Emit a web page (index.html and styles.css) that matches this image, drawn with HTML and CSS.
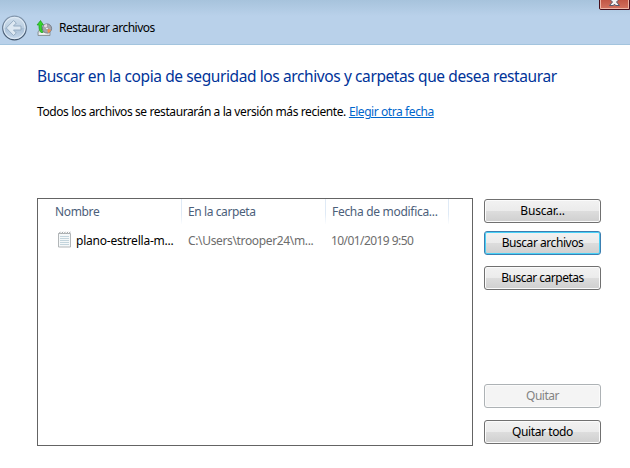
FILE: index.html
```html
<!DOCTYPE html>
<html lang="es">
<head>
<meta charset="utf-8">
<title>Restaurar archivos</title>
<link rel="stylesheet" href="styles.css">
</head>
<body>
<header class="titlebar">
  <svg class="back" width="28" height="28" viewBox="0 0 28 28">
    <defs>
      <linearGradient id="disc" x1="0" y1="0" x2="0" y2="1">
        <stop offset="0" stop-color="#d3e1ee"/><stop offset=".5" stop-color="#b9cde0"/><stop offset=".52" stop-color="#a9c0d7"/><stop offset="1" stop-color="#c8daed"/>
      </linearGradient>
      <linearGradient id="rim" x1="0" y1="0" x2="0" y2="1">
        <stop offset="0" stop-color="#8498ae"/><stop offset="1" stop-color="#3f5268"/>
      </linearGradient>
    </defs>
    <circle cx="13.500" cy="14" r="11.800" fill="url(#disc)" stroke="url(#rim)" stroke-width="1.200"/>
    <circle cx="13.500" cy="14" r="10.600" fill="none" stroke="#e2edf7"/>
    <path d="M12.500 6.500 5.300 14l7.200 7.500 2.800-2.500-2.800-3h7.500v-4h-7.500l2.800-3z" fill="#dde8f2" stroke="#91a8be" stroke-width=".9"/>
  </svg>
  <svg class="app-icon" width="17" height="17" viewBox="0 0 17 17">
    <path d="M2 12 4 9h7l3 3v3.500H2z" fill="#d8dcdc" stroke="#7c8588" stroke-width=".8"/>
    <path d="M3 13.800h8" stroke="#fff"/>
    <circle cx="11" cy="8.500" r="4.600" fill="#a5a6ae" stroke="#6b6f77" stroke-width=".8"/>
    <path d="M11 8.500 7.500 6a4.600 4.600 0 0 1 3.500-2z" fill="#e8d9e6"/>
    <path d="M11 8.500 15 10a4.500 4.500 0 0 1-3 3z" fill="#ef8b4e"/>
    <circle cx="11" cy="8.500" r="1.300" fill="#f5f5f5" stroke="#77737b" stroke-width=".5"/>
    <path d="M5 12.500C3 10.500 2.800 8 3 5H1l3.500-4.500L7.500 5H5.700c-.3 3 0 5 1.400 7.500z" fill="#35d52b" stroke="#159416" stroke-width=".6"/>
  </svg>
  <h1 class="window-title"><span class="t-window">Restaurar archivos</span></h1>
  <svg class="close" width="31" height="10" viewBox="0 0 31 10">
    <defs><linearGradient id="red" x1="0" y1="0" x2="0" y2="1"><stop offset="0" stop-color="#c05342"/><stop offset="1" stop-color="#d47461"/></linearGradient></defs>
    <path d="M.5-1V8q0 1.500 1.500 1.500h28.500V-1z" fill="url(#red)" stroke="#46101c"/>
    <path d="M1.500 0v8.500h28V0" fill="none" stroke="#efb6a7"/>
    <path d="M12-1h2.500l1 1 1-1H19v1.500l-1.500 1.500L20.500 5.500h-4l-1-1.500-1 1.500h-4L13.500 2 12 .5z" fill="#f3f3f3" stroke="#565a6c"/>
  </svg>
</header>
<main class="page">
  <h2 class="heading"><span class="t-heading">Buscar en la copia de seguridad los archivos y carpetas que desea restaurar</span></h2>
  <p class="intro"><span class="t-intro">Todos los archivos se restaurarán a la versión más reciente.</span><a class="link" href="#">Elegir otra fecha</a></p>
  <div class="workspace">
    <section class="list">
      <div class="row head">
        <div class="cell name"><span class="t-name">Nombre</span></div>
        <div class="cell"><span class="t-folder">En la carpeta</span></div>
        <div class="cell"><span class="t-date">Fecha de modifica...</span></div>
      </div>
      <div class="row item">
        <div class="cell file">
          <svg width="15" height="17" viewBox="0 0 15 17">
            <path d="M1.500 2.500h12v13.500h-12z" fill="#f5f8f9" stroke="#b2b6b8"/>
            <path d="M3 5.500h9M3 7.500h9M3 9.500h9M3 11.500h9M3 13.500h9" stroke="#c3d4dc"/>
            <path d="M2 2.500 3.500.8M4.500 2.500 6 .8M7 2.500 8.500.8M9.500 2.500 11 .8M12 2.500 13.300.8" stroke="#9b9fa1"/>
          </svg>
          <span class="t-file">plano-estrella-m...</span>
        </div>
        <div class="cell"><span class="t-path">C:\Users\trooper24\m...</span></div>
        <div class="cell when"><span class="t-when">10/01/2019 9:50</span></div>
      </div>
    </section>
    <aside class="actions">
      <button class="btn"><span class="t-b1">Buscar...</span></button>
      <button class="btn default"><span class="t-b2">Buscar archivos</span></button>
      <button class="btn folders"><span class="t-b3">Buscar carpetas</span></button>
      <button class="btn remove" disabled><span class="t-b4">Quitar</span></button>
      <button class="btn all"><span class="t-b5">Quitar todo</span></button>
    </aside>
  </div>
</main>
</body>
</html>
```
FILE: styles.css
```css
* { box-sizing: border-box; }
body {
  margin: 0;
  width: 630px;
  height: 468px;
  overflow: hidden;
  background: #fff;
  color: #000;
  font: 12px/16px "Noto Sans", "Open Sans", sans-serif;
}
h1, h2, p { margin: 0; font-weight: 400; white-space: nowrap; }
svg { display: block; flex: none; }

.titlebar {
  display: flex;
  height: 45px;
  background: linear-gradient(#a7c3dc, #b9d1ea 16px, #b9d1ea);
  border-bottom: 1px solid #a3c4de;
}
.back { margin: 14px 0 0 1px; }
.app-icon { margin: 20px 0 0 7px; }
.window-title { margin: 20px 0 0 6px; font-size: 12px; line-height: 16px; }
.close { margin-left: auto; }

.page { padding: 20px 29px 0 37px; }
.heading { font-size: 15.5px; line-height: 22px; color: #003399; }
.intro { display: flex; gap: 3px; margin-top: 17px; }
.link { color: #0066cc; text-decoration: underline; text-underline-offset: 1px; letter-spacing: -0.42px; }

.workspace { display: flex; margin-top: 78px; justify-content: space-between; }
.list { width: 436px; height: 248px; border: 1px solid #646464; }
.row { display: grid; grid-template-columns: 144px 144px 123px; white-space: nowrap; }
.head { height: 25px; color: #4c607a; }
.head .cell {
  padding: 5px 0 0 6px;
  border-right: 1px solid;
  border-image: linear-gradient(#dfeaf6, #dfeaf6 60%, #fff) 1;
}
.head .name { padding-left: 17px; }
.item { margin-top: 5px; height: 24px; color: #6d6d6d; }
.item .cell { padding: 4px 0 0 6px; }
.item .file { display: flex; gap: 4px; padding: 4px 0 0 19px; color: #000; }
.file svg { margin-top: -2px; }
.item .when { padding-left: 5px; }

.actions { display: flex; flex-direction: column; width: 117px; margin-top: 1px; }
.btn {
  width: 117px;
  height: 24px;
  padding: 0;
  border: 1px solid #707070;
  border-radius: 3px;
  background: linear-gradient(#f2f2f2, #ebebeb 50%, #dddddd 50%, #cfcfcf);
  box-shadow: inset 0 0 0 1px #fbfbfb;
  color: #000;
  font: inherit;
  white-space: nowrap;
}
.default { margin-top: 8px; border-color: #3c7fb1; box-shadow: inset 0 0 0 1px #48d1f7; }
.folders { margin-top: 11px; }
.remove { margin-top: 94px; border-color: #adb2b5; background: #f4f4f4; color: #838383; }
.all { margin-top: 12px; }

.t-heading { letter-spacing: -0.4px; }
.t-intro { letter-spacing: -0.41px; }
.t-window { letter-spacing: -0.5px; }
.t-name, .t-path { letter-spacing: -0.35px; }
.t-folder, .t-b5 { letter-spacing: -0.4px; }
.t-date { letter-spacing: -0.3px; }
.t-file { letter-spacing: -0.22px; }
.t-when { letter-spacing: -0.57px; }
.t-b1 { letter-spacing: -0.2px; }
.t-b2 { letter-spacing: -0.45px; }
.t-b3, .t-b4 { letter-spacing: -0.5px; }
```
